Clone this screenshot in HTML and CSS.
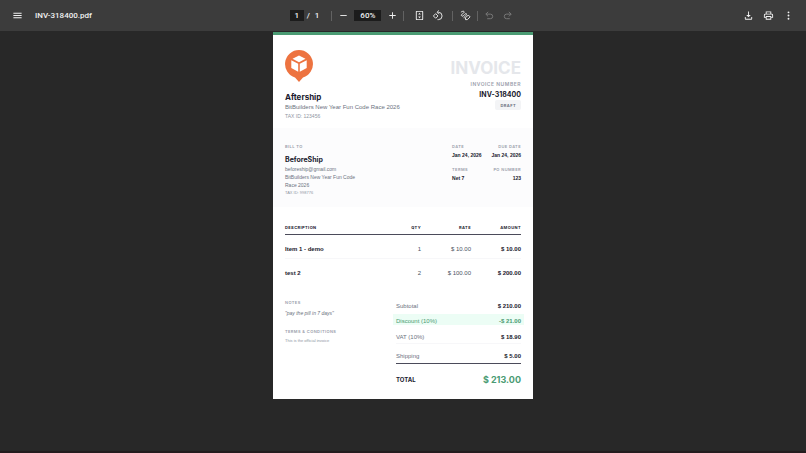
FILE: index.html
```html
<!DOCTYPE html>
<html lang="en">
<head>
    <meta charset="UTF-8">
    <meta name="viewport" content="width=device-width, initial-scale=1.0">
    <title>INV-318400.pdf</title>
    <link rel="stylesheet" href="styles.css">
</head>
<body>
    <header class="toolbar">
        <div class="toolbar-start">
            <button class="icon-btn" aria-label="Menu">
                <svg viewBox="0 0 24 24"><path d="M3 6h18v2H3zm0 5h18v2H3zm0 5h18v2H3z"/></svg>
            </button>
            <h1 class="file-name">INV-318400.pdf</h1>
        </div>
        <div class="toolbar-center">
            <div class="pager">
                <input class="page-input" type="text" value="1" aria-label="Page number">
                <span>/</span>
                <span>1</span>
            </div>
            <span class="divider"></span>
            <div class="zoom">
                <button class="icon-btn" aria-label="Zoom out">
                    <svg viewBox="0 0 24 24"><path d="M5 11h14v2H5z"/></svg>
                </button>
                <input class="zoom-input" type="text" value="60%" aria-label="Zoom level">
                <button class="icon-btn" aria-label="Zoom in">
                    <svg viewBox="0 0 24 24"><path d="M19 13h-6v6h-2v-6H5v-2h6V5h2v6h6z"/></svg>
                </button>
            </div>
            <span class="divider"></span>
            <div class="view">
                <button class="icon-btn" aria-label="Fit to page">
                    <svg viewBox="0 0 24 24"><path fill-rule="evenodd" d="M6 2h12a2 2 0 0 1 2 2v16a2 2 0 0 1-2 2H6a2 2 0 0 1-2-2V4a2 2 0 0 1 2-2zm0 2v16h12V4zm6 2l3 4H9zm0 12l3-4H9z"/></svg>
                </button>
                <button class="icon-btn" aria-label="Rotate counterclockwise">
                    <svg class="stroked" viewBox="0 0 24 24"><path d="M8 8l5 5-5 5-5-5z"/><path d="M15 1l-4 4 4 4M12 5h2a8 8 0 0 1 0 16h-2"/></svg>
                </button>
            </div>
            <span class="divider"></span>
            <div class="draw">
                <button class="icon-btn" aria-label="Draw">
                    <svg class="stroked" viewBox="0 0 24 24"><path d="M2 5c3-3 8-3 7 0S2 9 3 12s5 1 7-2 5-3 4 0-6 5-5 8"/><path d="M12 21v-4l6-6 4 4-6 6z"/></svg>
                </button>
            </div>
            <span class="divider"></span>
            <div class="history">
                <button class="icon-btn" aria-label="Undo" disabled>
                    <svg class="stroked" viewBox="0 0 24 24"><path d="M9 4L4 9l5 5M4 9h10a5 5 0 0 1 0 10H7"/></svg>
                </button>
                <button class="icon-btn" aria-label="Redo" disabled>
                    <svg class="stroked" viewBox="0 0 24 24"><path d="M15 4l5 5-5 5M20 9H10a5 5 0 0 0 0 10h7"/></svg>
                </button>
            </div>
        </div>
        <div class="toolbar-end">
            <button class="icon-btn" aria-label="Download">
                <svg viewBox="0 0 24 24"><path d="M11 3h2v8h4l-5 5-5-5h4zM4 15h2v4h12v-4h2v4a2 2 0 0 1-2 2H6a2 2 0 0 1-2-2z"/></svg>
            </button>
            <button class="icon-btn" aria-label="Print">
                <svg viewBox="0 0 24 24"><path fill-rule="evenodd" d="M6 3h12v5h1a3 3 0 0 1 3 3v6h-4v4H6v-4H2v-6a3 3 0 0 1 3-3h1zm2 2v3h8V5zM5 10a1 1 0 0 0-1 1v4h2v-2h12v2h2v-4a1 1 0 0 0-1-1zm3 5v4h8v-4z"/></svg>
            </button>
            <button class="icon-btn" aria-label="More actions">
                <svg viewBox="0 0 24 24"><circle cx="12" cy="5" r="2"/><circle cx="12" cy="12" r="2"/><circle cx="12" cy="19" r="2"/></svg>
            </button>
        </div>
    </header>

    <main class="viewer">
        <article class="page">
            <section class="invoice-head">
                <div class="sender">
                    <svg class="logo" viewBox="0 0 28 32">
                        <path fill="#ed7340" d="M14 0a14 14 0 0 1 4 27.400L14 32l-4-4.600A14 14 0 0 1 14 0z"/>
                        <path fill="#fff" d="M14 5.500l6.500 3.300L14 12.200 7.500 8.800zM6.300 10.200l6.900 3.600v7.900l-6.900-3.600zM21.700 10.200l-6.900 3.600v7.900l6.900-3.600z"/>
                    </svg>
                    <h2 class="sender-name">Aftership</h2>
                    <p class="sender-address">BitBuilders New Year Fun Code Race 2026</p>
                    <p class="tax-id">TAX ID: 123456</p>
                </div>
                <div class="invoice-id">
                    <p class="invoice-title">INVOICE</p>
                    <p class="label invoice-label">INVOICE NUMBER</p>
                    <p class="invoice-number">INV-318400</p>
                    <span class="status">DRAFT</span>
                </div>
            </section>

            <section class="billing">
                <div class="bill-to">
                    <h3 class="label">BILL TO</h3>
                    <p class="client-name">BeforeShip</p>
                    <p class="client-line">beforeship@gmail.com</p>
                    <p class="client-line">BitBuilders New Year Fun Code Race 2026</p>
                    <p class="tax-id client-tax">TAX ID: 998776</p>
                </div>
                <dl class="dates">
                    <div><dt class="label">DATE</dt><dd>Jan 24, 2026</dd></div>
                    <div><dt class="label">DUE DATE</dt><dd>Jan 24, 2026</dd></div>
                    <div><dt class="label">TERMS</dt><dd>Net 7</dd></div>
                    <div><dt class="label">PO NUMBER</dt><dd>123</dd></div>
                </dl>
            </section>

            <table class="items">
                <thead>
                    <tr><th>DESCRIPTION</th><th>QTY</th><th>RATE</th><th>AMOUNT</th></tr>
                </thead>
                <tbody>
                    <tr><td>Item 1 - demo</td><td>1</td><td>$ 10.00</td><td>$ 10.00</td></tr>
                    <tr><td>test 2</td><td>2</td><td>$ 100.00</td><td>$ 200.00</td></tr>
                </tbody>
            </table>

            <section class="summary">
                <div class="notes">
                    <h3 class="label">NOTES</h3>
                    <p class="note-text">"pay the pill in 7 days"</p>
                    <h3 class="label">TERMS &amp; CONDITIONS</h3>
                    <p class="terms-text">This is the official invoice</p>
                </div>
                <dl class="totals">
                    <div class="total-row"><dt>Subtotal</dt><dd>$ 210.00</dd></div>
                    <div class="total-row discount"><dt>Discount (10%)</dt><dd>-$ 21.00</dd></div>
                    <div class="total-row vat"><dt>VAT (10%)</dt><dd>$ 18.90</dd></div>
                    <div class="total-row shipping"><dt>Shipping</dt><dd>$ 5.00</dd></div>
                    <div class="total-row grand"><dt>TOTAL</dt><dd>$ 213.00</dd></div>
                </dl>
            </section>
        </article>
    </main>
</body>
</html>
```
FILE: styles.css
```css
* {
    box-sizing: border-box;
    margin: 0;
    padding: 0;
}

body {
    display: flex;
    flex-direction: column;
    min-height: 100vh;
    background: #282828;
    border-bottom: 2px solid #231c1e;
    font-family: Inter, "Liberation Sans", sans-serif;
}

/* toolbar */
.toolbar {
    display: grid;
    grid-template-columns: 1fr auto 1fr;
    align-items: center;
    height: 31px;
    padding: 0 10px 0 9px;
    background: #3c3c3c;
    color: #f1f1f1;
    font-family: Roboto, "Liberation Sans", sans-serif;
    font-size: 8px;
    font-weight: 500;
}

.toolbar-start,
.toolbar-center,
.toolbar-end,
.pager,
.zoom,
.view,
.draw,
.history {
    display: flex;
    align-items: center;
}

.toolbar-start {
    gap: 10px;
}

.toolbar-end {
    gap: 4px;
    justify-content: flex-end;
}

.file-name {
    font-size: 8px;
    font-weight: 500;
}

.icon-btn {
    display: flex;
    align-items: center;
    justify-content: center;
    width: 16px;
    height: 16px;
    border: none;
    background: none;
    color: #f1f1f1;
    cursor: pointer;
}

.icon-btn:disabled {
    color: #7c7c7c;
    cursor: default;
}

.icon-btn svg {
    width: 11px;
    height: 11px;
    fill: currentColor;
}

.icon-btn .stroked {
    fill: none;
    stroke: currentColor;
    stroke-width: 2;
}

.page-input,
.zoom-input {
    height: 11px;
    border: none;
    background: #1c1c1c;
    color: #f1f1f1;
    font: inherit;
    text-align: center;
}

.page-input {
    width: 14px;
}

.zoom-input {
    width: 27px;
    margin: 0 3px;
}

.pager {
    gap: 3px;
    padding-right: 12px;
}

.pager span + span {
    padding-left: 2px;
}

.zoom {
    padding: 0 3px;
}

.view {
    gap: 2px;
    padding: 0 7px;
}

.draw {
    padding: 0 4px;
}

.history {
    gap: 2px;
    padding-left: 3px;
}

.divider {
    width: 1px;
    height: 10px;
    background: #626262;
}

/* document */
.viewer {
    display: flex;
    flex: 1;
    justify-content: center;
    align-items: flex-start;
    padding-top: 1px;
}

.page {
    width: 260px;
    padding-bottom: 11px;
    border-top: 3px solid #4a9b73;
    background: #fff;
    color: #1a1a2e;
    font-family: "Liberation Sans", Arial, sans-serif;
    font-size: 6px;
    line-height: 8px;
}

.label {
    color: #9a9eab;
    font-family: Inter, sans-serif;
    font-size: 4px;
    font-weight: 600;
    line-height: 6px;
    letter-spacing: 0.1em;
}

.invoice-head {
    display: flex;
    justify-content: space-between;
    padding: 15px 12px 8px;
}

.logo {
    display: block;
    width: 28px;
    height: 32px;
    margin-bottom: 10px;
}

.sender-name {
    font-family: Inter, sans-serif;
    font-size: 8px;
    font-weight: 700;
    line-height: 10px;
}

.sender-address {
    color: #6b7280;
    line-height: 10px;
}

.tax-id {
    color: #9096a3;
    font-size: 5px;
    line-height: 8px;
}

.invoice-id {
    display: flex;
    flex-direction: column;
    align-items: flex-end;
    padding-top: 8px;
}

.invoice-title {
    color: #e5e7eb;
    font-family: Inter, sans-serif;
    font-size: 17px;
    font-weight: 700;
    line-height: 20px;
}

.invoice-label {
    padding-top: 3px;
    font-size: 5px;
    line-height: 7px;
}

.invoice-number {
    padding-top: 2px;
    font-family: Inter, sans-serif;
    font-size: 7px;
    font-weight: 700;
    line-height: 10px;
}

.status {
    padding: 3px 5px 1px;
    border-radius: 2px;
    background: #f3f4f6;
    color: #6b7280;
    font-family: Inter, sans-serif;
    font-size: 4px;
    font-weight: 700;
    line-height: 6px;
    letter-spacing: 0.1em;
}

.billing {
    display: flex;
    justify-content: space-between;
    padding: 16px 12px 10px;
    background: #fcfcfd;
}

.bill-to {
    width: 76px;
}

.client-name {
    padding: 6px 0 1px;
    font-family: Inter, sans-serif;
    font-size: 7px;
    font-weight: 700;
}

.client-line {
    color: #6b7280;
    font-size: 5px;
}

.client-tax {
    font-size: 4px;
}

.dates {
    display: grid;
    grid-template-columns: auto auto;
    align-content: start;
    gap: 8px 10px;
}

.dates div:nth-child(even) {
    text-align: right;
}

.dates dd {
    padding-top: 1px;
    font-size: 5px;
    font-weight: 600;
    line-height: 8px;
}

.items {
    width: calc(100% - 24px);
    margin: 16px 12px 18px;
    border-collapse: collapse;
}

.items th {
    height: 11px;
    border-bottom: 1px solid #4b4b5a;
    font-family: Inter, sans-serif;
    font-size: 4px;
    font-weight: 700;
    letter-spacing: 0.1em;
    text-align: right;
}

.items td {
    height: 24px;
    padding-top: 6px;
    border-bottom: 1px solid #f7f7f9;
    color: #4b5563;
    text-align: right;
    font-size: 6px;
}

.items tr:last-child td {
    border-bottom: none;
}

.items th:first-child,
.items td:first-child {
    text-align: left;
}

.items td:first-child,
.items td:last-child {
    color: #1a1a2e;
    font-weight: 600;
}

.items th:nth-child(2),
.items th:nth-child(3),
.items th:nth-child(4) {
    width: 50px;
}

.summary {
    display: flex;
    justify-content: space-between;
    padding: 0 12px;
}

.note-text {
    padding: 3px 0 12px;
    color: #6b7280;
    font-size: 5px;
    font-style: italic;
}

.terms-text {
    padding-top: 2px;
    color: #9096a3;
    font-size: 4px;
}

.totals {
    width: 125px;
}

.total-row {
    display: flex;
    justify-content: space-between;
    padding: 2px 0;
    color: #6b7280;
}

.total-row dd {
    color: #1a1a2e;
    font-weight: 600;
}

.total-row.discount {
    margin: 2px -3px;
    padding: 3px 3px 0;
    background: #ecfdf5;
    color: #4a9b73;
}

.total-row.discount dd {
    color: inherit;
}

.total-row.vat {
    padding: 6px 0 2px;
    border-bottom: 1px solid #f7f7f9;
}

.total-row.shipping {
    padding: 8px 0 3px;
    border-bottom: 1px solid #4b4b5a;
}

.total-row.grand {
    align-items: center;
    padding-top: 10px;
    color: #1a1a2e;
    font-family: Inter, sans-serif;
    font-weight: 700;
    line-height: 12px;
}

.total-row.grand dd {
    color: #4a9b73;
    font-size: 9px;
    font-weight: 700;
}
```
